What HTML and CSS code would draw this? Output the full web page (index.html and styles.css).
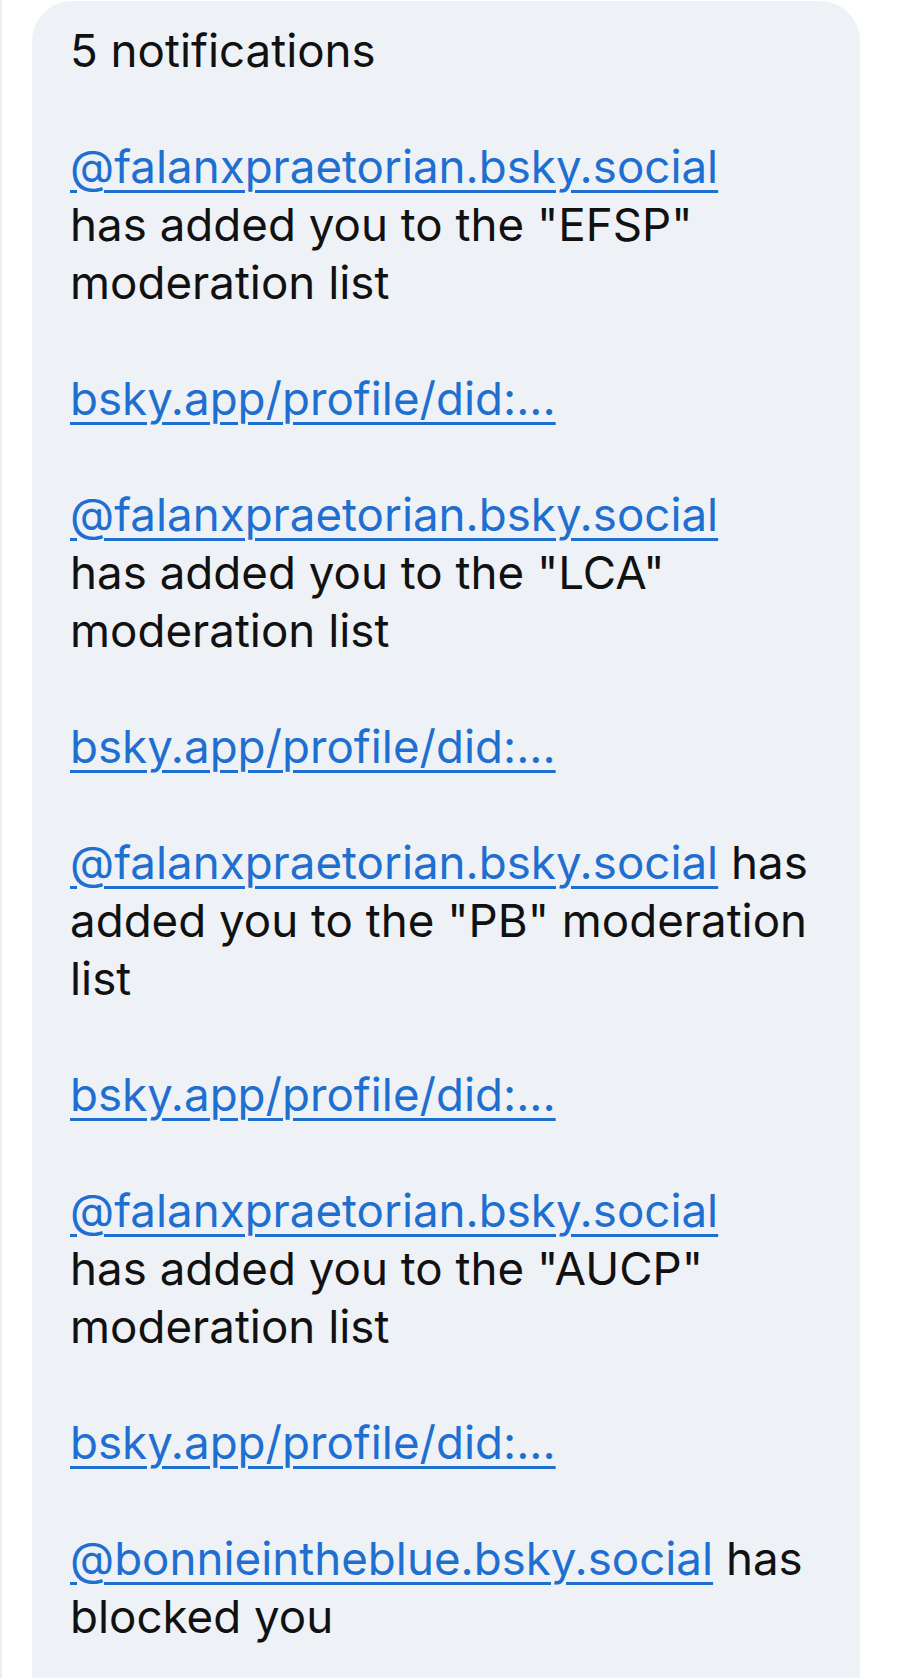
FILE: index.html
```html
<html>
	<head>
		<link rel="stylesheet" href="styles.css">
	</head>

	<body>
		<div class="screen">
			<div class="bubble">
				<p class="msg">5 notifications</p>

				<p class="msg">
					<a class="lnk" href="#">@falanxpraetorian.bsky.social</a><br>
					has added you to the "EFSP"<br>
					moderation list
				</p>
				<p class="msg"><a class="lnk" href="#">bsky.app/profile/did:...</a></p>

				<p class="msg">
					<a class="lnk" href="#">@falanxpraetorian.bsky.social</a><br>
					has added you to the "LCA"<br>
					moderation list
				</p>
				<p class="msg"><a class="lnk" href="#">bsky.app/profile/did:...</a></p>

				<p class="msg">
					<a class="lnk" href="#">@falanxpraetorian.bsky.social</a> has<br>
					added you to the "PB" moderation<br>
					list
				</p>
				<p class="msg"><a class="lnk" href="#">bsky.app/profile/did:...</a></p>

				<p class="msg">
					<a class="lnk" href="#">@falanxpraetorian.bsky.social</a><br>
					has added you to the "AUCP"<br>
					moderation list
				</p>
				<p class="msg"><a class="lnk" href="#">bsky.app/profile/did:...</a></p>

				<p class="msg">
					<a class="lnk" href="#">@bonnieintheblue.bsky.social</a> has<br>
					blocked you
				</p>
			</div>
		</div>
	</body>
</html>
```

FILE: styles.css
```css
body,
html {
	margin: 0;
	padding: 0;
	background-color: #ffffff;
}

.screen {
	border-left: 2px solid #eeeeee;
	padding: 1px 40px 0 30px;
	min-height: 1678px;
	box-sizing: border-box;
}

.bubble {
	background-color: #eef1f6;
	border-radius: 40px 40px 0 0;
	padding: 21px 20px 40px 38px;
	font-family: Inter, "Noto Sans", sans-serif;
	font-size: 45.7px;
	line-height: 58px;
	color: #111111;
}

.msg {
	margin: 0 0 58px 0;
	white-space: nowrap;
}

.msg:last-child {
	margin-bottom: 0;
}

.lnk {
	color: #1f6fd1;
	text-decoration: underline;
	text-decoration-thickness: 3px;
	text-underline-offset: 7px;
}
```
